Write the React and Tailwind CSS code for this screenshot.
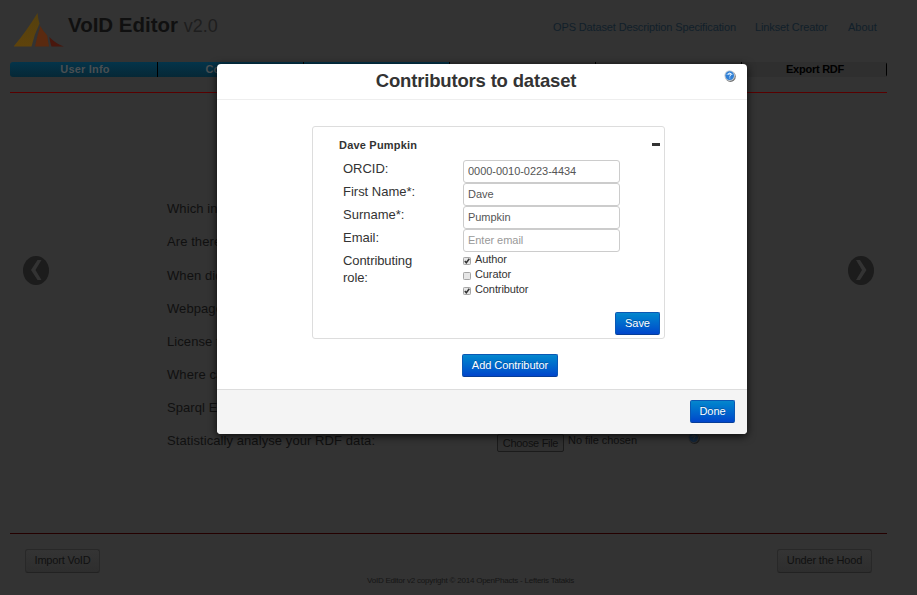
import React from "react";

const navItems = [
  { label: "User Info", done: true, width: "w-[148px] pl-[3px]" },
  { label: "Core Info", done: true, width: "w-[146px]" },
  { label: "", done: true, width: "w-[146px]" },
  { label: "", done: false, width: "w-[146px]" },
  { label: "", done: false, width: "w-[146px]" },
  { label: "Export RDF", done: false, width: "w-[145px] pl-[2px]" },
];

const questions = ["Which in", "Are there", "When did", "Webpage", "License f", "Where ca", "Sparql En"];

function Logo() {
  return (
    <svg className="block h-[35px] w-[50px]" viewBox="0 0 50 35">
      <defs>
        <linearGradient id="amber" x1="0" y1="0" x2="0" y2="1">
          <stop offset="0" stopColor="#54400e" />
          <stop offset="1" stopColor="#5f430b" />
        </linearGradient>
      </defs>
      <path d="M23.500 0 Q24 6 25.500 10.500 Q20 22 17.500 33.500 L-.5 33.500 Q12 19 23.500 0Z" fill="url(#amber)" />
      <path d="M26.300 13 Q29 18 33.300 22.500 Q33.800 28 35 33.500 L21 33.500 Q23 23 26.300 13Z" fill="#5a2a10" />
      <path d="M35.300 24 Q42 31 50 33.500 L37.500 33.500 Q36 29 35.300 24Z" fill="#49170d" />
    </svg>
  );
}

function HelpIcon({ dim }) {
  return (
    <svg className="block h-3 w-3" viewBox="0 0 12 12">
      <circle cx="6.500" cy="6.600" r="5.300" fill={dim ? "#1c1c1c" : "#777"} />
      <circle cx="5.700" cy="5.600" r="5.300" fill={dim ? "#2b2d2f" : "#c3cbd3"} />
      <circle cx="5.700" cy="5.600" r="4.300" fill={dim ? "#12253a" : "#2f7fd6"} />
      <path d="M2 5 Q5.500 .5 9.400 5Z" fill={dim ? "#1b2c3c" : "#78b4ee"} />
      <path
        d="M4.200 4.600 Q4.300 3.200 5.700 3.200 Q7.300 3.300 7.100 4.600 Q6.900 5.400 5.800 5.900 V6.500 M5.800 7.600 V8.400"
        fill="none"
        stroke={dim ? "#333" : "#fff"}
        strokeWidth="1"
      />
    </svg>
  );
}

function Arrow({ right }) {
  return (
    <svg className="block h-[29px] w-[26px]" viewBox="0 0 26 29">
      <ellipse cx="13" cy="14.500" rx="13" ry="14.500" fill="#1c1c1c" />
      {right ? (
        <path d="M8 4 H12 L18.500 14 L12 24 H8 L14 14Z" fill="#333" />
      ) : (
        <path d="M18.500 4 H14.500 L8 14 L14.500 24 H18.500 L12.500 14Z" fill="#333" />
      )}
    </svg>
  );
}

function PrimaryButton({ children, className }) {
  return (
    <button
      className={
        "block h-[23px] whitespace-nowrap rounded-[2px] border border-[#0a58b4] border-b-[#063d97] bg-gradient-to-b from-[#0887cd] to-[#0345cb] pb-px text-[11px] leading-5 tracking-[-0.05px] text-white [text-shadow:0_-1px_0_rgba(0,0,0,0.25)] " +
        className
      }
    >
      {children}
    </button>
  );
}

function Field({ label, value, placeholder }) {
  return (
    <div className="flex h-[23px]">
      <label className="w-[120px] text-[13px] leading-[17px] tracking-[-0.01px]">{label}</label>
      <input
        readOnly
        defaultValue={value}
        placeholder={placeholder}
        className="h-[23px] w-[157px] rounded-[3px] border border-[#ccc] bg-white px-1 pb-[2px] text-[11px] tracking-[-0.04px] text-[#555] placeholder:text-[#999]"
      />
    </div>
  );
}

function Check({ label, checked }) {
  return (
    <label className="flex h-[15px] items-start">
      <svg className="mt-[5px] block h-2 w-2" viewBox="0 0 8 8">
        <rect x=".5" y=".5" width="7" height="7" rx=".8" fill="#e6e6e6" stroke="#a5a5a5" />
        {checked && <path d="M1.800 4 L3.300 5.700 L6.300 1.800" fill="none" stroke="#333" strokeWidth="1.500" />}
      </svg>
      <span className="ml-1 text-[11px] leading-[14px] tracking-[-0.1px]">{label}</span>
    </label>
  );
}

function Page() {
  return (
    <div className="flex h-[595px] w-[917px] flex-col bg-[#333] text-[#101010]">
      <header className="flex h-[62px] justify-between pl-[14px] pr-10">
        <div className="flex">
          <div className="pt-[13px]">
            <Logo />
          </div>
          <h1 className="ml-1 whitespace-nowrap pt-[13px] text-[20.500px] font-bold leading-6">
            VoID Editor <span className="text-[18px] font-normal text-[#1e1e1e]">v2.0</span>
          </h1>
        </div>
        <nav className="flex whitespace-nowrap pt-5 text-[11px] leading-[14px] tracking-[-0.13px] text-[#111f2a]">
          <a className="w-[202px]">OPS Dataset Description Specification</a>
          <a className="w-[93px]">Linkset Creator</a>
          <a className="w-[29px] tracking-normal">About</a>
        </nav>
      </header>
      <div className="ml-[10px] flex h-[15px] w-[877px] overflow-hidden rounded-[3px]">
        {navItems.map((item, i) => (
          <div
            key={i}
            className={
              "h-[15px] border-r border-black text-center text-[11px] font-bold leading-[15px] " +
              item.width +
              (item.done
                ? " bg-gradient-to-b from-[#04344a] to-[#062836] tracking-[0.2px] text-[#4a4f52]"
                : " bg-[#2f2f2f] tracking-[-0.25px] text-black")
            }
          >
            {item.label}
          </div>
        ))}
      </div>
      <div className="ml-[10px] mt-[15px] h-px w-[877px] bg-[#580000]" />
      <main className="flex h-[440px] justify-between pl-[23px] pr-[43px]">
        <div className="pt-[163px]">
          <Arrow />
        </div>
        <div className="ml-[118px] flex-1 whitespace-nowrap pt-[99.400px] text-[13px] leading-[33px] tracking-[0.08px]">
          {questions.map((q) => (
            <div key={q} className="h-[33.080px]">
              {q}
            </div>
          ))}
          <div className="flex h-[33px]">
            <span className="w-[330px]">Statistically analyse your RDF data:</span>
            <span className="mt-[10px] h-[18px] w-[67px] rounded-[2px] border border-[#1b1b1b] bg-[#303030] text-center text-[11px] leading-4 tracking-[-0.3px]">
              Choose File
            </span>
            <span className="ml-1 w-[120px] text-[11px] tracking-[-0.05px]">No file chosen</span>
            <span className="mt-[8px]">
              <HelpIcon dim />
            </span>
          </div>
        </div>
        <div className="pt-[163px]">
          <Arrow right />
        </div>
      </main>
      <div className="ml-[10px] h-px w-[877px] bg-[#240000]" />
      <footer className="flex h-[61px] whitespace-nowrap pl-[25px] pt-[15px]">
        <button className="h-6 w-[75px] rounded-[3px] border border-[#282828] border-b-[#222] bg-gradient-to-b from-[#343434] to-[#2e2e2e] pb-[2px] text-[11px] leading-5 tracking-[-0.2px]">
          Import VoID
        </button>
        <p className="ml-[267px] mt-[26px] h-3 w-[410px] text-[8px] leading-[11px] tracking-[-0.22px] text-[#151515]">
          VoID Editor v2 copyright © 2014 OpenPhacts - Lefteris Tatakis
        </p>
        <button className="h-6 w-[95px] rounded-[3px] border border-[#282828] border-b-[#222] bg-gradient-to-b from-[#343434] to-[#2e2e2e] pb-[2px] text-[11px] leading-5 tracking-[-0.17px]">
          Under the Hood
        </button>
      </footer>
    </div>
  );
}

function ContributorsDialog() {
  return (
    <section className="absolute left-[217px] top-[64px] flex h-[370px] w-[530px] flex-col rounded-[4px] bg-white text-[#333] shadow-[0_2px_8px_rgba(0,0,0,0.8)]">
      <header className="flex h-9 border-b border-[#eee]">
        <h2 className="ml-[118px] w-[282px] whitespace-nowrap text-center text-[18.500px] font-bold leading-[33px] tracking-[-0.17px]">
          Contributors to dataset
        </h2>
        <span className="ml-[107px] mt-[6px]">
          <HelpIcon />
        </span>
      </header>
      <div className="flex h-[289px] flex-col pl-[95px] pt-[26px]">
        <div className="flex h-[213px] w-[353px] flex-col rounded-[3px] border border-[#ddd]">
          <div className="flex h-[33px] justify-between pl-[26px] pr-1 pt-[11px]">
            <h3 className="whitespace-nowrap text-[11px] font-bold leading-[14px] tracking-[0.2px]">Dave Pumpkin</h3>
            <span className="mt-[5px] h-[3px] w-2 bg-[#333]" />
          </div>
          <div className="pl-[30px]">
            <Field label="ORCID:" value="0000-0010-0223-4434" />
            <Field label="First Name*:" value="Dave" />
            <Field label="Surname*:" value="Pumpkin" />
            <Field label="Email:" placeholder="Enter email" />
            <div className="flex h-[60px]">
              <div className="w-[120px] text-[13px] leading-[17px] tracking-[-0.08px]">
                Contributing
                <br />
                role:
              </div>
              <div>
                <Check label="Author" checked />
                <Check label="Curator" />
                <Check label="Contributor" checked />
              </div>
            </div>
          </div>
          <PrimaryButton className="ml-[302px] w-[45px]">Save</PrimaryButton>
        </div>
        <PrimaryButton className="ml-[150px] mt-[15px] w-24">Add Contributor</PrimaryButton>
      </div>
      <footer className="flex h-[45px] justify-end rounded-b-[4px] border-t border-[#ddd] bg-[#f4f4f4] pr-3 pt-[10px]">
        <PrimaryButton className="w-[45px]">Done</PrimaryButton>
      </footer>
    </section>
  );
}

export default function App() {
  return (
    <div className="relative h-[595px] w-[917px] overflow-hidden font-['Liberation_Sans',Arial,sans-serif]">
      <Page />
      <ContributorsDialog />
    </div>
  );
}
